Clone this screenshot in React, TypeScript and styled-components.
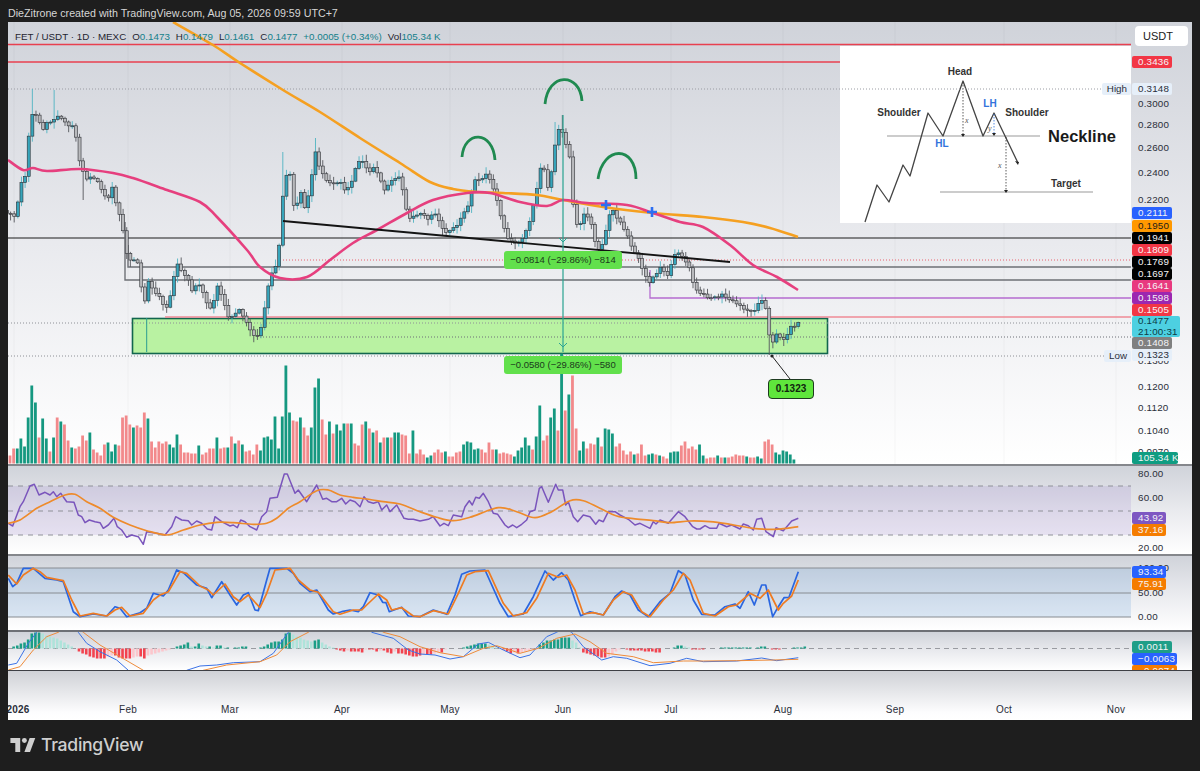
import React, { FC } from 'react';
import styled, { createGlobalStyle } from 'styled-components';

type Pt = [number, number];

const GlobalStyle = createGlobalStyle`
	html, body {
		margin: 0;
		background: #1e1e1e;
	}
`;

const FONT = `'Liberation Sans', Arial, sans-serif`;

// chart helpers: everything is stored in page pixels, the svg viewBox does the offset
const dayX = (d: number) => 14.2 + 3.63 * d;
const rnd = (seed: number) => {
	const v = Math.sin(seed * 12.9898) * 43758.5453;
	return v - Math.floor(v);
};
const pairs = (flat: number[], ox: number, oy: number): Pt[] => {
	const out: Pt[] = [];
	for (let i = 0; i < flat.length; i += 2) out.push([ox + flat[i] / 3, oy + flat[i + 1] / 3]);
	return out;
};
const line = (pts: Pt[]) => 'M' + pts.map(([x, y]) => `${x.toFixed(1)} ${y.toFixed(1)}`).join('L');
const smooth = (pts: Pt[]) => {
	let d = `M${pts[0][0]} ${pts[0][1]}`;
	for (let i = 0; i < pts.length - 1; i++) {
		const p0 = pts[Math.max(i - 1, 0)];
		const p1 = pts[i];
		const p2 = pts[i + 1];
		const p3 = pts[Math.min(i + 2, pts.length - 1)];
		const c1x = p1[0] + (p2[0] - p0[0]) / 6;
		const c1y = p1[1] + (p2[1] - p0[1]) / 6;
		const c2x = p2[0] - (p3[0] - p1[0]) / 6;
		const c2y = p2[1] - (p3[1] - p1[1]) / 6;
		d += `C${c1x.toFixed(1)} ${c1y.toFixed(1)} ${c2x.toFixed(1)} ${c2y.toFixed(1)} ${p2[0].toFixed(1)} ${p2[1].toFixed(1)}`;
	}
	return d;
};

const closePath: Pt[] = [
	[8, 212], [10, 215], [16, 217], [20, 185], [25, 177], [28, 142], [32, 115], [38, 115], [42, 130], [48, 122], [55, 118], [60, 115],
	[67, 125], [75, 127], [78, 158], [82, 165], [85, 180], [90, 178], [97, 180], [103, 195], [108, 200], [113, 183], [117, 210], [122, 220],
	[125, 250], [127, 255], [130, 260], [135, 258], [140, 265], [143, 318], [147, 280], [150, 282], [155, 293], [160, 298], [165, 308],
	[168, 305], [172, 290], [176, 262], [180, 270], [188, 280], [192, 290], [198, 283], [205, 295], [208, 310], [212, 308], [218, 285],
	[224, 305], [230, 320], [235, 315], [240, 310], [245, 320], [250, 330], [255, 338], [259, 335], [263, 320], [266, 300], [270, 278],
	[277, 263], [280, 240], [284, 177], [290, 175], [295, 215], [300, 190], [305, 210], [310, 190], [315, 150], [320, 170], [327, 180],
	[335, 185], [340, 180], [345, 190], [350, 185], [357, 165], [362, 160], [368, 172], [373, 168], [378, 175], [385, 190], [392, 180],
	[400, 175], [405, 205], [410, 220], [420, 213], [428, 218], [436, 212], [440, 225], [448, 233], [455, 228], [463, 215], [467, 208],
	[475, 180], [482, 178], [487, 175], [492, 183], [502, 220], [508, 240], [517, 243], [525, 235], [530, 220], [537, 187], [542, 160],
	[548, 187], [553, 167], [557, 127], [563, 133], [570, 157], [573, 203], [578, 232], [585, 210], [593, 230], [597, 253], [605, 240],
	[607, 217], [613, 210], [618, 220], [627, 233], [633, 250], [640, 260], [643, 273], [650, 282], [660, 267], [668, 275], [677, 250],
	[683, 257], [690, 270], [695, 290], [703, 295], [713, 298], [722, 295], [730, 300], [742, 307], [753, 313], [758, 302], [765, 300],
	[767, 330], [772, 343], [777, 332], [783, 342], [790, 328], [795, 325], [798, 323],
];

const wickOverride: { [day: number]: { top?: number; low?: number } } = {
	5: { top: 89 },
	11: { top: 90 },
	19: { low: 200 },
	74: { top: 152 },
	83: { top: 138 },
	151: { top: 115 },
	149: { top: 122 },
	208: { low: 355 },
};

const interp = (x: number) => {
	if (x <= closePath[0][0]) return closePath[0][1];
	for (let i = 0; i < closePath.length - 1; i++) {
		const [x0, y0] = closePath[i];
		const [x1, y1] = closePath[i + 1];
		if (x >= x0 && x <= x1) return y0 + ((y1 - y0) * (x - x0)) / (x1 - x0);
	}
	return closePath[closePath.length - 1][1];
};

const candles = Array.from({ length: 219 }, (_, i) => {
	const d = i - 2;
	const x = dayX(d);
	const close = interp(x) + (rnd(d + 3) - 0.5) * 3;
	const open = interp(dayX(d - 1)) + (rnd(d + 2) - 0.5) * 3;
	const over = wickOverride[d] || {};
	return {
		x,
		open,
		close,
		top: over.top ?? Math.min(open, close) - 1 - rnd(d + 50) * 6,
		low: over.low ?? Math.max(open, close) + 1 + rnd(d + 90) * 6,
	};
});

// negative = red bar
const volumeLeft = [
	-8, -15, 15, 25, 17, 46, 78, 61, -26, 45, 25, -12, 26, -46, 42, -39, -23, 16, -15, -17, -28, -23, 31, -14, -11, -8, -19, 21, 12, 19, -18,
	-46, -48, -39, 36, -38, -36, -51, 45, -22, -16, -22, -20, -22, 19, 16, 29, -19, -11, -11, -10, -10, 18, -9, -11, -15, -15, 26, -15, -16,
	16, -27, 20, -23, 19, -12, -13, -9, -19, 13, 26, 27, 24, 47, 15, 47, 98, 51, -43, -42, 46, -36, -28, 36, 76, 85, -44, -29, 42, -30, 39,
	33, 40, -40, 40, -20, -18, -39, 42, -35, 31, -33, 21, -26, 26, -26, 31, 31, -29, -28, -10, 33, -10, -14,
];
const volumeRight = [
	-9, -9, 6, 8, -11, -14, -11, 12, -7, -7, -11, -12, 19, 22, 21, 14, 15, -14, -11, -21, -14, 14, -10, -11, -10, -9, 7, 13, 16, 26, 18, -14,
	27, 58, -23, -28, 46, 55, -33, 110, -53, 69, -88, -35, 13, 22, -15, -20, -19, 26, -17, 35, 34, 30, -17, -20, -13, -9, -12, 9, -10, -19,
	-8, 9, 10, -9, 8, -7, -5, 11, 12, 12, -18, -22, -15, -17, -14, 19, 8, -5, -6, -6, 8, -6, 6, -6, -7, -9, -8, -8, 7, -6, -6, 7, 5, -22, -24,
	-19, 11, 9, 13, 12, 9, 4,
];
const macdLeft = [
	0, 2, 3, 5, 6, 9, 15, 16, 16, 15, 13, 12, 11, 10, 8, 6, 4, 2, 0, -3, -5, -6, -8, -9, -10, -10, -10, -8, -7, -7, -9, -10, -10, -10, -9, -8, -8, -10,
	-7, -6, -5, -4, -3, -2, -1, 0, 2, 3, 4, 6, 2, 2, 5, 3, 2, 2, 1, 3, 3, 1, 1, 0, 1, 1, 2, 2, 0, 0, 0, 1, 2, 4, 6, 7, 7, 9, 15, 16, 14, 12, 11, 9, 8,
	7, 8, 9, 6, 4, 2, 1, -1, -2, -3, -2, -3, -3, -3, -4, -1, -1, -1, -3, -2, -2, -4, -5, -3, -5, -5, -6, -7, -8, -8, -7,
];
const macdRight = [
	-7, -6, -6, -6, -5, -4, -4, -1, 0, 0, 0, 0, 1, 2, 3, 4, 5, 5, 5, 4, 3, 1, 0, -1, -3, -5, -4, -5, -4, -3, -2, -1, 0, 4, 6, 8, 8, 9, 9, 11, 11, 11, 8,
	6, 1, -4, -5, -6, -7, -8, -9, -9, -8, -6, -3, -1, 0, -1, -2, -2, -2, -2, -3, -3, -3, -4, -4, 0, 0, 0, 1, 3, 3, 2, 1, -1, -1, -1, -1, 0, 0, 0, 0, 1,
	1, 1, 1, 1, 1, 1, 1, 1, 0, 1, 2, 2, 0, -1, -1, -1, 0, 0, 0, 1, 1, 1, 2,
];

const orangeMa: Pt[] = [
	[173, 22], [213, 45], [240, 63], [283, 90], [320, 112], [360, 138], [400, 163], [430, 182], [453, 189], [477, 192], [503, 193], [537, 195],
	[563, 200], [603, 207], [653, 213], [703, 217], [743, 222], [770, 228], [798, 237],
];
const pinkMa: Pt[] = [
	[8, 160], [23, 170], [33, 168], [47, 171], [80, 169], [113, 173], [133, 178], [167, 190], [200, 202], [217, 217], [247, 250], [260, 267],
	[280, 278], [307, 277], [330, 260], [353, 243], [377, 230], [407, 213], [433, 200], [467, 193], [490, 193], [520, 202], [547, 206], [563, 200],
	[587, 203], [627, 205], [653, 213], [680, 222], [703, 227], [730, 245], [753, 265], [777, 277], [798, 290],
];

const rsiLine = [
	...pairs([25, 190, 38, 198, 60, 140, 70, 125, 90, 78, 103, 73, 117, 105, 135, 97, 150, 105, 160, 95, 170, 110, 182, 100, 200, 125, 222, 127, 235, 165, 245, 170, 255, 188, 268, 180, 285, 185, 300, 188, 310, 205, 325, 195, 342, 175, 352, 200, 365, 210, 380, 232, 395, 225, 415, 230, 430, 253, 440, 215, 470, 220, 495, 225, 515, 200, 527, 170, 545, 180, 565, 182, 575, 195, 590, 183, 605, 190, 622, 207, 635, 210, 645, 170, 665, 185, 690, 198, 700, 195, 712, 203, 722, 180, 735, 185, 750, 200, 770, 210, 785, 170, 800, 155, 810, 115, 832, 112, 853, 42, 862, 42, 885, 100, 895, 90, 920, 125, 950, 75, 968, 118, 980, 115, 995, 125, 1010, 125, 1025, 115, 1037, 132, 1050, 120, 1065, 125, 1080, 140, 1092, 110, 1105, 125, 1120, 130, 1135, 125, 1145, 150, 1160, 135, 1170, 155, 1190, 135, 1212, 175, 1225, 178, 1240, 178, 1260, 183], 0, 460),
	...pairs([25, 178, 40, 170, 60, 198, 72, 190, 85, 197, 100, 165, 125, 170, 135, 140, 148, 122, 157, 135, 167, 112, 178, 115, 190, 100, 205, 125, 220, 160, 233, 163, 255, 195, 265, 203, 278, 195, 290, 203, 305, 193, 320, 180, 330, 155, 345, 150, 358, 85, 365, 80, 385, 127, 407, 73, 415, 90, 428, 90, 437, 135, 445, 125, 460, 170, 473, 185, 490, 165, 510, 170, 527, 193, 537, 180, 550, 185, 565, 155, 585, 155, 600, 165, 625, 178, 645, 195, 660, 190, 690, 205, 700, 185, 708, 192, 720, 180, 745, 190, 775, 155, 795, 170, 818, 200, 830, 207, 840, 207, 855, 197, 870, 205, 890, 205, 897, 190, 920, 200, 935, 195, 960, 207, 970, 192, 985, 197, 1000, 210, 1010, 178, 1025, 175, 1038, 215, 1060, 230, 1068, 203, 1090, 212, 1115, 183, 1135, 175], 420, 460),
];
const rsiMa = [
	...pairs([25, 190, 60, 180, 110, 145, 150, 125, 195, 105, 225, 103, 260, 125, 300, 145, 340, 172, 390, 195, 440, 212, 500, 225, 550, 210, 600, 195, 650, 187, 700, 188, 760, 193, 800, 190, 830, 175, 865, 145, 900, 125, 950, 92, 985, 90, 1020, 105, 1060, 112, 1100, 117, 1150, 125, 1200, 132, 1260, 155], 0, 460),
	...pairs([50, 172, 100, 182, 150, 172, 235, 143, 290, 155, 345, 173, 395, 155, 450, 122, 490, 122, 540, 145, 590, 168, 640, 176, 700, 182, 750, 188, 810, 183, 870, 185, 930, 193, 1000, 205, 1060, 208, 1100, 205, 1135, 200], 420, 460),
];
const stochK = [
	...pairs([25, 355, 38, 380, 50, 370, 70, 325, 100, 325, 135, 355, 170, 360, 190, 365, 220, 455, 240, 470, 280, 462, 320, 468, 345, 440, 360, 445, 380, 470, 420, 458, 440, 445, 460, 400, 490, 408, 505, 390, 530, 330, 550, 338, 590, 375, 620, 385, 635, 413, 665, 365, 690, 405, 710, 435, 730, 405, 745, 398, 765, 450, 775, 452, 800, 360, 810, 325, 860, 325, 880, 340, 900, 370, 930, 395, 950, 390, 985, 450, 1000, 462, 1025, 455, 1050, 450, 1075, 455, 1090, 440, 1110, 398, 1135, 405, 1148, 427, 1158, 428, 1168, 455, 1190, 447, 1205, 442, 1225, 468, 1260, 470], 0, 460),
	...pairs([40, 450, 80, 463, 105, 405, 125, 343, 150, 333, 195, 330, 240, 430, 265, 470, 310, 462, 340, 410, 375, 333, 400, 360, 425, 338, 445, 360, 465, 420, 482, 467, 510, 455, 550, 465, 585, 410, 605, 393, 630, 405, 655, 450, 685, 470, 720, 425, 750, 400, 775, 332, 795, 345, 820, 420, 845, 463, 885, 465, 915, 440, 945, 432, 960, 445, 985, 395, 1003, 435, 1025, 375, 1037, 375, 1058, 470, 1075, 440, 1092, 413, 1107, 412, 1135, 335], 420, 460),
];
const stochD = [
	...pairs([25, 345, 50, 372, 70, 345, 100, 325, 120, 335, 140, 352, 170, 358, 190, 362, 215, 420, 240, 468, 280, 460, 320, 468, 345, 450, 365, 442, 390, 468, 430, 460, 460, 420, 480, 405, 505, 395, 540, 335, 560, 340, 600, 378, 625, 390, 640, 405, 675, 372, 700, 410, 720, 425, 745, 405, 780, 443, 800, 400, 825, 330, 870, 325, 895, 360, 930, 390, 955, 397, 1000, 455, 1020, 463, 1060, 450, 1085, 450, 1100, 435, 1135, 402, 1160, 420, 1175, 450, 1205, 443, 1240, 468, 1260, 470], 0, 460),
	...pairs([40, 452, 85, 462, 115, 400, 140, 345, 165, 335, 205, 332, 250, 430, 280, 468, 320, 458, 350, 415, 385, 340, 415, 352, 440, 345, 465, 390, 490, 462, 520, 458, 550, 465, 580, 420, 610, 395, 635, 405, 665, 455, 690, 470, 730, 420, 760, 390, 790, 340, 810, 360, 850, 460, 885, 468, 925, 440, 950, 435, 990, 400, 1020, 415, 1045, 390, 1075, 450, 1090, 430, 1115, 408, 1135, 360], 420, 460),
];
const macdBlue = [
	...pairs([25, 615, 50, 610, 85, 550, 110, 517, 120, 490], 0, 460),
	...pairs([225, 490, 235, 517, 260, 550, 300, 575, 350, 600, 385, 631, 400, 650], 0, 460),
	...pairs([540, 650, 560, 631, 600, 618, 650, 615, 700, 608, 780, 605, 820, 580, 865, 517, 880, 490], 0, 460),
	...pairs([1100, 490, 1115, 517, 1180, 535, 1225, 570, 1260, 582], 0, 460),
	...pairs([45, 585, 90, 597, 130, 590, 175, 552, 205, 547, 250, 570, 300, 593, 330, 585, 380, 530, 410, 517, 430, 505, 455, 517, 490, 560, 545, 600, 580, 590, 620, 595, 690, 617, 750, 610, 800, 595, 850, 605, 950, 603, 1025, 594, 1070, 602, 1135, 593], 420, 460),
];
const macdOrange = [
	...pairs([25, 630, 60, 620, 100, 570, 140, 530, 175, 517, 190, 505, 235, 505, 250, 517, 300, 555, 430, 631, 450, 645, 590, 645, 610, 631, 680, 615, 780, 605, 830, 585, 870, 545, 925, 517, 940, 505, 1135, 505, 1150, 517, 1200, 530, 1260, 560], 0, 460),
	...pairs([60, 578, 130, 590, 190, 565, 230, 557, 300, 580, 355, 565, 410, 535, 465, 522, 510, 545, 560, 580, 640, 590, 700, 608, 790, 603, 850, 603, 950, 602, 1060, 600, 1135, 598], 420, 460),
];

const macdBars = [
	...macdLeft.map((v, i) => ({ x: 10 + 3.63 * i, v })),
	...macdRight.map((v, i) => ({ x: 420 + 3.63 * i, v })),
];
const volumeBars = [
	...volumeLeft.map((v, i) => ({ x: 10 + 3.63 * i, v })),
	...volumeRight.map((v, i) => ({ x: 420 + 3.63 * i, v })),
];

const months = [128, 230, 342, 450, 563, 671, 783, 895, 1004, 1116];

const Page = styled.div`
	width: 1200px;
	height: 771px;
	display: flex;
	flex-direction: column;
	overflow: hidden;
	background: #1e1e1e;
	font-family: ${FONT};
`;

const Caption = styled.div`
	height: 22px;
	padding: 3px 0 0 8px;
	box-sizing: border-box;
	color: #d6d6d6;
	font-size: 10.7px;
	line-height: 20px;
	white-space: nowrap;
`;

const Frame = styled.div`
	width: 1184px;
	height: 698px;
	margin-left: 8px;
	display: flex;
	flex-direction: column;
	overflow: hidden;
`;

const Pane = styled.div<{ $h: number; $border: string }>`
	position: relative;
	flex: none;
	height: ${(p) => p.$h}px;
	display: grid;
	grid-template-columns: 1123px 61px;
	border-bottom: ${(p) => p.$border};
	background: linear-gradient(180deg, #d0d3da 0%, #e9eaee 50%, #ffffff 100%);
`;

const Plot = styled.svg`
	display: block;
	width: 1123px;
	height: 100%;
	overflow: hidden;
`;

const Axis = styled.div`
	position: relative;
	overflow: hidden;
	font-size: 9.8px;
	letter-spacing: 0.2px;
	color: #2a2e39;
`;

const Tick = styled.span<{ $y: number }>`
	position: absolute;
	left: 7px;
	top: ${(p) => p.$y - 6}px;
	height: 12px;
	line-height: 12px;
`;

const TagStack = styled.div<{ $top: number }>`
	position: absolute;
	left: 1px;
	top: ${(p) => p.$top}px;
	display: flex;
	flex-direction: column;
	align-items: flex-start;
`;

const Tag = styled.span<{ $bg: string; $fg?: string; $w?: number; $h?: number }>`
	width: ${(p) => p.$w ?? 40}px;
	height: ${(p) => p.$h ?? 12}px;
	box-sizing: border-box;
	padding-left: 6px;
	line-height: ${(p) => (p.$h ? p.$h / 2 : 12)}px;
	border-radius: 2px;
	background: ${(p) => p.$bg};
	color: ${(p) => p.$fg ?? '#f4f4f6'};
	white-space: nowrap;
`;

const CurrencyButton = styled.div`
	position: absolute;
	left: 4px;
	top: 4px;
	width: 53px;
	height: 20px;
	box-sizing: border-box;
	padding-left: 8px;
	border-radius: 4px;
	background: #ffffff;
	font-size: 11px;
	line-height: 20px;
	letter-spacing: 0;
	color: #1a1a1a;
`;

const Legend = styled.div`
	position: absolute;
	left: 7px;
	top: 8px;
	display: flex;
	gap: 6px;
	font-size: 9.8px;
	line-height: 13px;
	color: #1f2430;
	white-space: nowrap;
`;

const LegendValue = styled.span`
	color: #14808a;
`;

const SideNote = styled.span<{ $y: number }>`
	position: absolute;
	right: 61px;
	top: ${(p) => p.$y - 6}px;
	height: 12px;
	padding: 0 4px 0 5px;
	background: #e6eff9;
	border-radius: 2px;
	font-size: 9.8px;
	line-height: 12px;
	color: #2a2e39;
`;

const MeasurePill = styled.div<{ $top: number }>`
	position: absolute;
	left: 496px;
	top: ${(p) => p.$top}px;
	width: 118px;
	height: 18px;
	border-radius: 3px;
	background: #62e04c;
	color: #1c3a1c;
	font-size: 9.5px;
	line-height: 18px;
	text-align: center;
	white-space: nowrap;
`;

const Callout = styled.div`
	position: absolute;
	left: 760px;
	top: 357px;
	width: 46px;
	height: 20px;
	box-sizing: border-box;
	border: 1px solid #1e3a20;
	border-radius: 4px;
	background: #5fe63c;
	color: #10240f;
	font-size: 10px;
	font-weight: 700;
	line-height: 18px;
	text-align: center;
`;

const TimeAxis = styled.div`
	position: relative;
	flex: 1;
	overflow: hidden;
	background: linear-gradient(180deg, #cfd1d6 0%, #fdfdfe 85%, #ffffff 100%);
`;

const TimeLabel = styled.span<{ $x: number; $bold?: boolean }>`
	position: absolute;
	left: ${(p) => p.$x - 8}px;
	top: 33px;
	transform: translateX(-50%);
	font-size: 10px;
	font-weight: ${(p) => (p.$bold ? 700 : 400)};
	letter-spacing: 0.2px;
	line-height: 12px;
	color: #2a2e39;
`;

const Footer = styled.div`
	flex: 1;
	display: flex;
	align-items: center;
	gap: 5px;
	padding: 0 0 2px 10px;
	color: #cfcfcf;
`;

const Brand = styled.span`
	font-family: Inter, 'Open Sans', sans-serif;
	font-size: 17.6px;
	font-weight: 500;
	letter-spacing: -0.3px;
`;

const InsetLabel = styled.text<{ $size?: number; $fill?: string }>`
	font-family: ${FONT};
	font-size: ${(p) => p.$size ?? 10}px;
	font-weight: 700;
	fill: ${(p) => p.$fill ?? '#333'};
	text-anchor: middle;
`;

const InsetVar = styled.text`
	font-family: 'Liberation Serif', serif;
	font-size: 8px;
	font-style: italic;
	fill: #555;
`;

const Inset: FC = () => (
	<g>
		<rect x={840} y={46} width={291} height={177} fill='#fff' />
		<path d='M887 136H1040M940 192H1093' stroke='#999' strokeWidth={1.2} fill='none' />
		<path
			d='M865 222L877 185L889 202L903 165L910 176L928 113L943 136L963 81L983 136L994 113L1018 163'
			stroke='#444'
			strokeWidth={1.3}
			fill='none'
			strokeLinejoin='round'
		/>
		<path d='M963 82V134M1006 137V190' stroke='#333' strokeWidth={0.8} strokeDasharray='1.5 1.5' fill='none' />
		<path d='M994 114V134' stroke='#2a6fe0' strokeWidth={0.8} strokeDasharray='1.5 1.5' fill='none' />
		<path d='M961 134h4l-2 3zM1004 190h4l-2 3zM992 133h4l-2 3z' fill='#222' />
		<path d='M1015 161l4 1l-1 3z' fill='#222' />
		<InsetLabel x={960} y={75}>Head</InsetLabel>
		<InsetLabel x={899} y={116}>Shoulder</InsetLabel>
		<InsetLabel x={1027} y={116}>Shoulder</InsetLabel>
		<InsetLabel x={942} y={147} $fill='#3273dc'>HL</InsetLabel>
		<InsetLabel x={990} y={107} $fill='#3273dc'>LH</InsetLabel>
		<InsetLabel x={1082} y={142} $size={16.5} $fill='#1a1a1a'>Neckline</InsetLabel>
		<InsetLabel x={1066} y={187} $size={10}>Target</InsetLabel>
		<InsetVar x={965} y={123}>x</InsetVar>
		<InsetVar x={988} y={131}>y</InsetVar>
		<InsetVar x={998} y={168}>x</InsetVar>
	</g>
);

const MainPlot: FC = () => (
	<Plot viewBox='8 22 1123 442'>
		{[...months, 14].map((x) => (
			<path key={x} d={`M${x} 22V464`} stroke='#000' strokeOpacity={0.03} />
		))}
		<path d='M8 44.5H1131' stroke='#e8404f' strokeWidth={1.6} />
		<path d='M8 62H840' stroke='#e8404f' strokeWidth={1.6} />
		<Inset />
		<path d='M8 89H1106' stroke='#9a9ca3' strokeWidth={1} strokeDasharray='1 2' />
		<rect x={132.5} y={318.5} width={695} height={35} fill='#b9f2a2' stroke='#12664e' strokeWidth={1.6} />
		<path d='M165 317H1131' stroke='#ef8a96' strokeWidth={1.3} />
		<path d='M8 323H1131' stroke='#8e9096' strokeWidth={1} strokeDasharray='1 2' />
		<path d='M260 337H1131' stroke='#6d6f76' strokeWidth={1} strokeDasharray='1 2' />
		<path d='M8 356H1106' stroke='#8e9096' strokeWidth={1} strokeDasharray='1 2' />
		<path d='M283 260H1131' stroke='#e8606c' strokeWidth={1} strokeDasharray='1 2' />
		<path d='M8 238H1131' stroke='#1c1c1c' strokeWidth={1.1} />
		<path d='M128 245V267H1131' stroke='#6e7076' strokeWidth={1.4} fill='none' />
		<path d='M125 222V280H1131' stroke='#6e7076' strokeWidth={1.4} fill='none' />
		<path d='M650 270V298H1131' stroke='#b56cd0' strokeWidth={1.3} fill='none' />
		<path d='M146.7 318V352' stroke='#2a9d90' strokeWidth={1} />

		{candles.map((c, i) => {
			const up = c.close <= c.open;
			return (
				<g key={i}>
					<path d={`M${c.x} ${c.top}V${c.low}`} stroke={up ? '#4fb3c2' : '#55575c'} strokeWidth={0.9} />
					<rect
						x={c.x - 1.5}
						y={Math.min(c.open, c.close)}
						width={3}
						height={Math.max(Math.abs(c.open - c.close), 1)}
						fill={up ? '#37a5bb' : '#b9babd'}
						stroke='#2c2e33'
						strokeWidth={0.6}
					/>
				</g>
			);
		})}

		<path d={smooth(orangeMa)} stroke='#f5a021' strokeWidth={2.6} fill='none' />
		<path d={smooth(pinkMa)} stroke='#e63f7e' strokeWidth={2.6} fill='none' />
		<path d='M283 221L730 262' stroke='#141414' strokeWidth={1.9} />
		<path d='M462 157C464 130 493 130 495 160' stroke='#1f8a50' strokeWidth={2.8} fill='none' />
		<path d='M545 104C548 72 580 72 582 101' stroke='#1f8a50' strokeWidth={2.8} fill='none' />
		<path d='M598 179C603 145 636 145 636 179' stroke='#1f8a50' strokeWidth={2.8} fill='none' />
		<path d='M606 200V210M601 205H611M652 207V217M647 212H657' stroke='#2c6ef2' strokeWidth={2.6} />

		<path d='M563 115V352' stroke='#2ba593' strokeWidth={1.2} />
		<path d='M559 238L563 242L567 238M559 343L563 347L567 343' stroke='#2ba593' strokeWidth={1} fill='none' />
		<path d='M772 356L790 379' stroke='#222' strokeWidth={1} />
		<circle cx={772} cy={356} r={1.5} fill='#222' />

		{volumeBars.map((b, i) => (
			<rect key={i} x={b.x - 1.4} y={463.5 - Math.abs(b.v)} width={2.8} height={Math.abs(b.v)} fill={b.v > 0 ? '#159880' : '#f2898b'} />
		))}
	</Plot>
);

const RsiPlot: FC = () => (
	<Plot viewBox='8 466 1123 88'>
		<rect x={8} y={486} width={1123} height={49} fill='#7e57c2' fillOpacity={0.13} />
		<path d='M8 486H1131M8 511H1131M8 535H1131' stroke='#8f9198' strokeWidth={1} strokeDasharray='5 5' />
		<path d={line(rsiLine)} stroke='#7a55bc' strokeWidth={1.5} fill='none' strokeLinejoin='round' />
		<path d={smooth(rsiMa)} stroke='#ee8b2b' strokeWidth={1.7} fill='none' />
	</Plot>
);

const StochPlot: FC = () => (
	<Plot viewBox='8 556 1123 74'>
		<rect x={8} y={568} width={1123} height={49} fill='#2f7fd0' fillOpacity={0.15} />
		<path d='M8 568H1131M8 593H1131M8 617H1131' stroke='#888b92' strokeWidth={1.2} />
		<path d={line(stochK)} stroke='#2a66e0' strokeWidth={1.7} fill='none' strokeLinejoin='round' />
		<path d={line(stochD)} stroke='#ee7b22' strokeWidth={1.7} fill='none' strokeLinejoin='round' />
	</Plot>
);

const MacdPlot: FC = () => (
	<Plot viewBox='8 632 1123 38'>
		<path d='M8 648.5H1131' stroke='#999ba1' strokeWidth={1} strokeDasharray='5 4' />
		{macdBars.map((b, i) => {
			const prev = i > 0 ? macdBars[i - 1].v : 0;
			const color = b.v >= 0 ? (b.v >= prev ? '#1a9e86' : '#aee3da') : b.v <= prev ? '#f2434f' : '#fcc6cc';
			return (
				<rect
					key={i}
					x={b.x - 1.3}
					y={b.v >= 0 ? 648.5 - b.v : 648.5}
					width={2.6}
					height={Math.abs(b.v)}
					fill={color}
				/>
			);
		})}
		<path d={line(macdBlue)} stroke='#3b72e6' strokeWidth={1} fill='none' />
		<path d={line(macdOrange)} stroke='#ee8b3a' strokeWidth={1} fill='none' />
	</Plot>
);

const Logo: FC = () => (
	<svg width='26' height='14' viewBox='0 0 36 20' fill='#cfcfcf'>
		<path d='M14 20H7V7H0V0h14v20zM28 20h-8L27.5 0h8L28 20z' />
		<circle cx='20' cy='3.5' r='3.5' />
	</svg>
);

const App: FC = () => {
	return (
		<Page>
			<GlobalStyle />
			<Caption>DieZitrone created with TradingView.com, Aug 05, 2026 09:59 UTC+7</Caption>
			<Frame>
				<Pane $h={442} $border='2px solid #85878c'>
					<MainPlot />
					<Axis>
						<CurrencyButton>USDT</CurrencyButton>
						<Tick $y={82}>0.3000</Tick>
						<Tick $y={103}>0.2800</Tick>
						<Tick $y={126}>0.2600</Tick>
						<Tick $y={151}>0.2400</Tick>
						<Tick $y={178}>0.2200</Tick>
						<Tick $y={339}>0.1300</Tick>
						<Tick $y={365}>0.1200</Tick>
						<Tick $y={386}>0.1120</Tick>
						<Tick $y={409}>0.1040</Tick>
						<Tick $y={430}>0.0970</Tick>
						<TagStack $top={34}>
							<Tag $bg='#f23645'>0.3436</Tag>
						</TagStack>
						<TagStack $top={61}>
							<Tag $bg='#e6eff9' $fg='#2a2e39'>0.3148</Tag>
						</TagStack>
						<TagStack $top={185}>
							<Tag $bg='#2962ff'>0.2111</Tag>
						</TagStack>
						<TagStack $top={198}>
							<Tag $bg='#ff9800' $fg='#1b1b1b'>0.1950</Tag>
							<Tag $bg='#000'>0.1941</Tag>
							<Tag $bg='#f23645'>0.1809</Tag>
							<Tag $bg='#000'>0.1769</Tag>
							<Tag $bg='#000'>0.1697</Tag>
							<Tag $bg='#e8397f'>0.1641</Tag>
							<Tag $bg='#9c27b0'>0.1598</Tag>
							<Tag $bg='#f23645'>0.1505</Tag>
							<Tag $bg='#4dd0e1' $fg='#0c3b46' $w={48} $h={21}>
								0.1477
								<br />
								21:00:31
							</Tag>
							<Tag $bg='#808080'>0.1408</Tag>
							<Tag $bg='#e6eff9' $fg='#2a2e39'>0.1323</Tag>
						</TagStack>
						<TagStack $top={430}>
							<Tag $bg='#0f9d82' $w={46}>105.34 K</Tag>
						</TagStack>
					</Axis>
					<Legend>
						<span>FET / USDT · 1D · MEXC</span>
						<span>O<LegendValue>0.1473</LegendValue></span>
						<span>H<LegendValue>0.1479</LegendValue></span>
						<span>L<LegendValue>0.1461</LegendValue></span>
						<span>C<LegendValue>0.1477</LegendValue></span>
						<LegendValue>+0.0005 (+0.34%)</LegendValue>
						<span>Vol<LegendValue>105.34 K</LegendValue></span>
					</Legend>
					<SideNote $y={67}>High</SideNote>
					<SideNote $y={334}>Low</SideNote>
					<MeasurePill $top={229}>−0.0814 (−29.86%) −814</MeasurePill>
					<MeasurePill $top={334}>−0.0580 (−29.86%) −580</MeasurePill>
					<Callout>0.1323</Callout>
				</Pane>
				<Pane $h={88} $border='2px solid #85878c'>
					<RsiPlot />
					<Axis>
						<Tick $y={8}>80.00</Tick>
						<Tick $y={32}>60.00</Tick>
						<Tick $y={82}>20.00</Tick>
						<TagStack $top={46}>
							<Tag $bg='#7e57c2' $w={34}>43.92</Tag>
							<Tag $bg='#f57c00' $w={34}>37.16</Tag>
						</TagStack>
					</Axis>
				</Pane>
				<Pane $h={74} $border='2px solid #6e7076'>
					<StochPlot />
					<Axis>
						<Tick $y={12}>100.00</Tick>
						<Tick $y={37}>50.00</Tick>
						<Tick $y={61}>0.00</Tick>
						<TagStack $top={10}>
							<Tag $bg='#2962ff' $w={34}>93.34</Tag>
							<Tag $bg='#f57c00' $w={34}>75.91</Tag>
						</TagStack>
					</Axis>
				</Pane>
				<Pane $h={38} $border='1px solid #3d3f44'>
					<MacdPlot />
					<Axis>
						<TagStack $top={9}>
							<Tag $bg='#1f9e88'>0.0011</Tag>
							<Tag $bg='#2962ff' $w={45}>−0.0063</Tag>
							<Tag $bg='#f57c00' $w={45}>−0.0074</Tag>
						</TagStack>
					</Axis>
				</Pane>
				<TimeAxis>
					<TimeLabel $x={18} $bold>2026</TimeLabel>
					{['Feb', 'Mar', 'Apr', 'May', 'Jun', 'Jul', 'Aug', 'Sep', 'Oct', 'Nov'].map((m, i) => (
						<TimeLabel key={m} $x={months[i]}>{m}</TimeLabel>
					))}
				</TimeAxis>
			</Frame>
			<Footer>
				<Logo />
				<Brand>TradingView</Brand>
			</Footer>
		</Page>
	);
};

export default App;
